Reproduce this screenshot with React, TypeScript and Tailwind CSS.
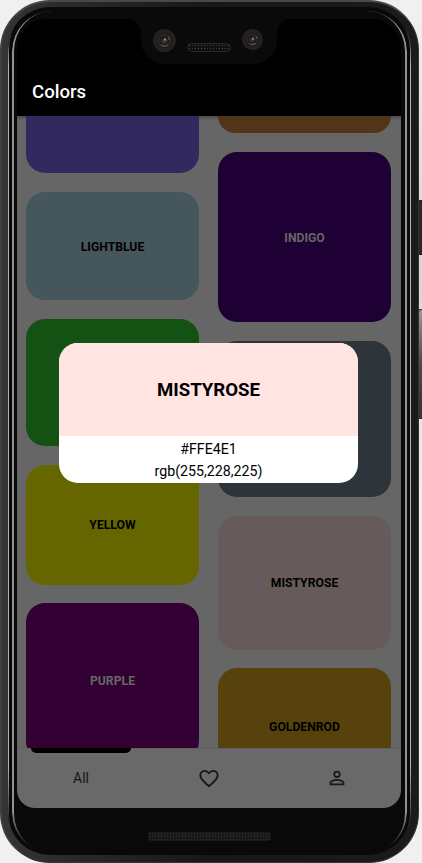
import React from "react";

type Swatch = { name?: string; box: string };

const left: Swatch[] = [
  { box: "h-[57px] rounded-b-[19px] bg-[#322a5f]" },
  { name: "LIGHTBLUE", box: "h-[108px] rounded-[19px] bg-[#45565c] text-black pt-[2px]" },
  { box: "h-[127px] rounded-[19px] bg-[#145214]" },
  { name: "YELLOW", box: "h-[119.500px] rounded-[19px] bg-[#666600] text-black pt-px" },
  { name: "PURPLE", box: "h-[157px] -mt-[0.5px] rounded-[19px] bg-[#330033] text-[#666]" },
];

const right: Swatch[] = [
  { box: "h-[17px] rounded-b-[19px] bg-[#523519]" },
  { name: "INDIGO", box: "h-[170px] rounded-[19px] bg-[#1e0034] text-[#666] pt-[2px]" },
  { box: "h-[156px] rounded-[19px] bg-[#2d343a]" },
  { name: "MISTYROSE", box: "h-[134px] rounded-[19px] bg-[#665b5a] text-black" },
  { name: "GOLDENROD", box: "h-[119px] -mt-px rounded-[19px] bg-[#57420d] text-black" },
];

function Column({ items }: { items: Swatch[] }) {
  return (
    <div className="flex w-[173px] flex-col gap-[19px]">
      {items.map((s, i) => (
        <div
          key={i}
          className={`flex shrink-0 items-center justify-center text-[12.2px] leading-none font-bold ${s.box}`}
        >
          {s.name}
        </div>
      ))}
    </div>
  );
}

function Camera({ className }: { className: string }) {
  return (
    <svg viewBox="0 0 22 22" className={`absolute ${className}`}>
      <circle cx="11" cy="11" r="11" fill="#26211c" />
      <circle cx="11" cy="11" r="7.2" fill="#171718" />
      <circle cx="11" cy="11" r="5.8" fill="#1e1e20" stroke="#333233" strokeWidth="1" />
      <path d="M8 15.2a5.2 5.2 0 0 0 6.4-.2M14.8 7.5a5.3 5.3 0 0 1 .8 3" stroke="#555051" strokeWidth="1.3" fill="none" />
      <path d="M7.5 11.5l4-4 3 3.5-3.500 3z" fill="#353031" />
      <circle cx="11.3" cy="10.2" r=".9" fill="#b9adac" />
      <circle cx="9.7" cy="12.4" r=".6" fill="#7a4a38" />
    </svg>
  );
}

function Notch() {
  return (
    <div className="absolute top-0 left-[124px] h-[45px] w-[136px] rounded-b-[24px] bg-[#0a0a0a]">
      <svg viewBox="0 0 164 15" className="absolute top-0 -left-[14px] h-[15px] w-[164px]" fill="#0a0a0a">
        <path d="M0 0H164C156 0 150 6 150 15H14C14 6 8 0 0 0Z" />
      </svg>
      <Camera className="top-[10px] left-[12px] size-[23px]" />
      <div className="absolute top-[24px] left-[46px] h-[9px] w-[44px] rounded-full border border-[#292929] bg-[#101010] bg-[radial-gradient(#484848_0.8px,transparent_1px)] bg-size-[3px_3px]" />
      <Camera className="top-[10px] left-[101px] size-[21px]" />
    </div>
  );
}

export default function App() {
  return (
    <div className="relative h-[863px] w-[422px] overflow-hidden bg-[#f0f0f0] font-[Roboto,sans-serif]">
      <div className="absolute top-[15px] right-0 h-[490px] w-[8px] bg-linear-to-b from-[#f0f0f0] via-[#d5d5d5] to-[#f0f0f0]" />
      <div className="absolute top-[200px] left-[417px] h-[55px] w-[5px] rounded-l-sm border-y border-[#111] bg-[#292929]" />
      <div className="absolute top-[309px] left-[417px] h-[110px] w-[5px] rounded-tl-sm border-y border-l-2 border-y-[#333] border-l-[#202020] bg-linear-to-b from-[#999] via-[#4c4c4c] to-[#333]" />

      {/* Metal body */}
      <div className="relative flex h-[863px] w-[419px] flex-col overflow-hidden rounded-[50px] border-t-2 border-r border-b border-l-2 border-t-[#484848] border-r-[#333] border-b-[#343434] border-l-[#3e3e3e] bg-linear-to-r from-[#343434] via-[#171717] to-[#1b1b1b] pt-[5px] pr-[8px] pb-[7px] pl-[6px]">
        <div className="flex min-h-0 flex-1 flex-col rounded-[42px] bg-[#090909] pt-[12px] pl-[9px]">
          <main className="relative h-[789px] w-[384px] shrink-0 overflow-hidden rounded-t-[30px] rounded-b-[18px] bg-black">
            <div className="flex h-full flex-col">
              <header className="flex h-[97px] shrink-0 items-end bg-black pb-[13px] pl-[15px]">
                <h1 className="text-[18.6px] leading-[22px] font-medium text-white">Colors</h1>
              </header>
              <section className="flex h-[632px] shrink-0 gap-[19px] overflow-hidden bg-[#666] pl-[9px] shadow-[inset_0_3px_3px_-1px_#0004]">
                <Column items={left} />
                <Column items={right} />
              </section>
              <nav className="relative grid flex-1 grid-cols-3 items-center border-t border-[#606060] bg-[#696969] pb-px">
                <div className="absolute -top-px left-[14px] h-[5px] w-[100px] rounded-b-[5px] bg-black" />
                <span className="text-center text-[14px] text-[#161616]">All</span>
                <svg viewBox="0 0 24 24" className="size-[23px] -translate-x-[0.5px] justify-self-center fill-[#191919]">
                  <path d="M16.5 3c-1.74 0-3.41.81-4.5 2.09C10.91 3.81 9.24 3 7.5 3 4.42 3 2 5.42 2 8.5c0 3.78 3.4 6.86 8.55 11.54L12 21.35l1.45-1.32C18.6 15.36 22 12.28 22 8.5 22 5.42 19.58 3 16.5 3m-4.4 15.55-.1.1-.1-.1C7.14 14.24 4 11.39 4 8.5 4 6.5 5.5 5 7.5 5c1.54 0 3.04.99 3.57 2.36h1.87C13.46 5.99 14.96 5 16.5 5c2 0 3.5 1.5 3.5 3.5 0 2.89-3.14 5.74-7.9 10.05" />
                </svg>
                <svg viewBox="0 0 24 24" className="size-[22px] justify-self-center fill-[#191919]">
                  <path d="M12 5.9a2.1 2.1 0 1 1 0 4.2 2.1 2.1 0 0 1 0-4.2m0 9c2.97 0 6.1 1.46 6.1 2.1v1.1H5.9V17c0-.64 3.13-2.1 6.1-2.1M12 4a4 4 0 1 0 0 8 4 4 0 0 0 0-8m0 9c-2.67 0-8 1.34-8 4v3h16v-3c0-2.66-5.33-4-8-4" />
                </svg>
              </nav>
            </div>
            <Notch />
            <div
              role="dialog"
              className="absolute top-[324px] left-[42px] flex h-[140px] w-[299px] flex-col overflow-hidden rounded-[19px] bg-white text-center text-black"
            >
              <div className="flex h-[93px] shrink-0 items-center justify-center bg-[#ffe4e1] pt-[2px] text-[18.6px] font-bold">
                MISTYROSE
              </div>
              <div className="pt-[2px] text-[14.2px] leading-[22px]">
                <p>#FFE4E1</p>
                <p>rgb(255,228,225)</p>
              </div>
            </div>
          </main>
          <div className="mt-[24px] ml-[131px] h-[9px] w-[123px] rounded-[3px] bg-[#191919] bg-[radial-gradient(#333_0.8px,transparent_1px)] bg-size-[3px_3px]" />
        </div>

        {/* Reflections along the glass edge */}
        <div className="pointer-events-none absolute top-[5px] right-[7px] bottom-[6px] left-[6px] rounded-[42px] border-x border-x-[#b5b5b5] mask-[linear-gradient(transparent_20px,black_60px,black_760px,transparent_825px)]" />
        <div className="pointer-events-none absolute top-[9px] right-[11px] bottom-[9px] left-[10px] rounded-[40px] border-x-2 border-x-[#929292] mask-[linear-gradient(black_0px,black_800px,transparent_840px)]" />
      </div>
    </div>
  );
}
